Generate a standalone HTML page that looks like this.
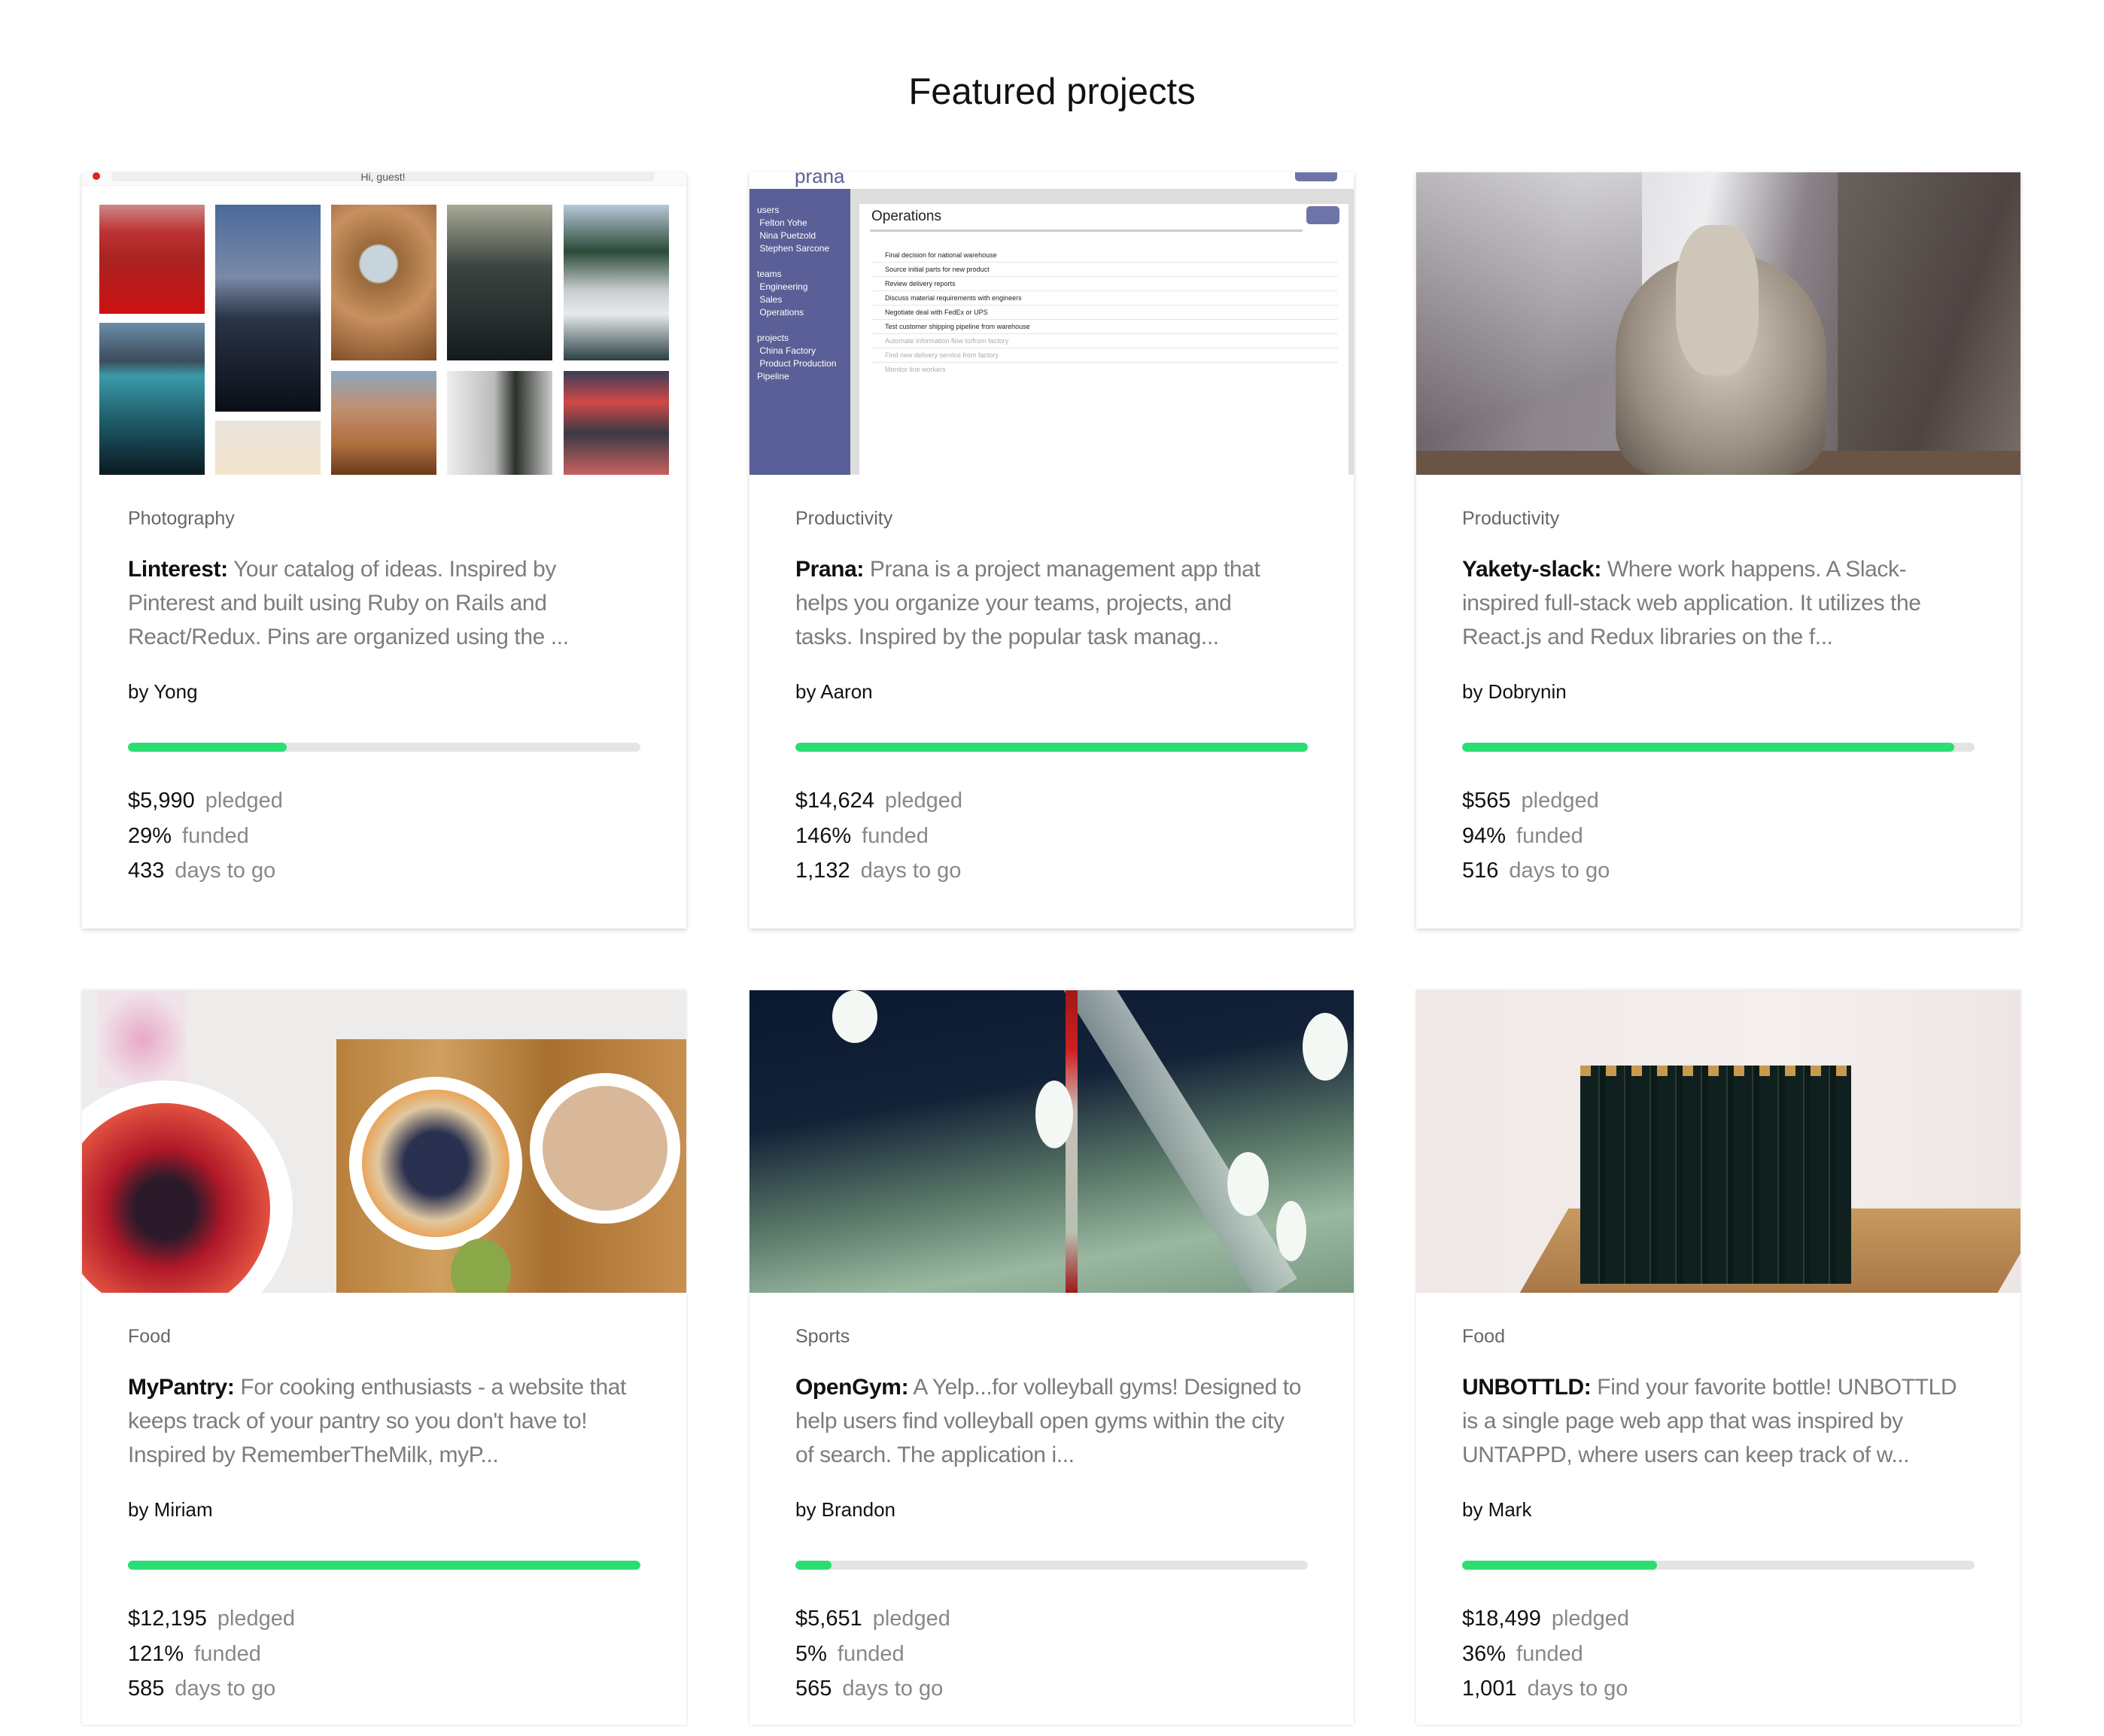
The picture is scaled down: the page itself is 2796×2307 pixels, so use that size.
<!DOCTYPE html>
<html><head><meta charset="utf-8"><style>
*{margin:0;padding:0;box-sizing:border-box}
body{width:2796px;height:2307px;background:#fff;position:relative;overflow:hidden;font-family:"Liberation Sans",sans-serif}
h1{position:absolute;top:92px;left:0;width:2796px;text-align:center;font-weight:normal;font-size:49px;color:#111;line-height:60px}
.card{position:absolute;width:803px;background:#fff;box-shadow:0 2px 6px rgba(0,0,0,.18);overflow:hidden}
.img{position:absolute;left:0;top:0;width:803px;height:402px;overflow:hidden}
.cat{position:absolute;left:61px;top:442px;font-size:25px;line-height:36px;color:#666}
.desc{position:absolute;left:61px;top:505px;width:681px;font-size:30px;letter-spacing:-0.4px;line-height:45px;color:#7c7c7c}
.desc b{color:#111;font-weight:bold}
.by{position:absolute;left:61px;top:672px;font-size:26px;line-height:36px;color:#111}
.bar{position:absolute;left:61px;top:986px;width:681px;height:12px;border-radius:6px;background:#e4e4e4;overflow:hidden}
.bar i{display:block;height:12px;background:#2bde73;border-radius:6px}
.stats{position:absolute;left:61px;top:1042px;font-size:29px;line-height:46.5px;color:#111}
.stats span{color:#888;margin-left:14px}
.r1{top:229px;height:1005px}
.r2{top:1316px;height:976px;box-shadow:0 0 4px rgba(0,0,0,.15)}
.r1 .bar{top:758px}.r1 .stats{top:812px}
.r2 .bar{top:758px}.r2 .stats{top:812px}
.c1{left:109px}.c2{left:996px}.c3{left:1882px}
.a{position:absolute}
</style></head><body>
<h1>Featured projects</h1>

<div class="card r1 c1">
 <div class="img" style="background:#fff">
  <div class="a" style="left:0;top:0;width:805px;height:18px;background:#fafafa;border-bottom:1px solid #eee"></div>
  <div class="a" style="left:40px;top:0;width:720px;height:12px;background:#eee;font-size:14px;line-height:12px;text-align:center;color:#555">Hi, guest!</div>
  <div class="a" style="left:14px;top:0;width:10px;height:10px;border-radius:50%;background:#d22"></div>
  <div class="a" style="left:23px;top:43px;width:140px;height:145px;background:linear-gradient(#c88 0%,#b33 25%,#a22 50%,#c11 100%)"></div>
  <div class="a" style="left:23px;top:200px;width:140px;height:202px;background:linear-gradient(#6a8ca8 0%,#3c4c5c 25%,#3a9aa8 35%,#1e5a68 65%,#0a1a22 100%)"></div>
  <div class="a" style="left:177px;top:43px;width:140px;height:275px;background:linear-gradient(#4a6a9a 0%,#7a8aa8 35%,#2a3446 55%,#0a0e18 100%)"></div>
  <div class="a" style="left:177px;top:330px;width:140px;height:72px;background:linear-gradient(#e8e4dc,#f4e4cc)"></div>
  <div class="a" style="left:331px;top:43px;width:140px;height:207px;background:radial-gradient(circle at 45% 38%,#c8d4dc 0 16%,#9a6a3a 18%,#c89060 50%,#7a4a22 100%)"></div>
  <div class="a" style="left:331px;top:264px;width:140px;height:138px;background:linear-gradient(#8aa8c0 0%,#c09070 35%,#b07040 70%,#6a3a1a 100%)"></div>
  <div class="a" style="left:485px;top:43px;width:140px;height:207px;background:linear-gradient(#a8aa98 0%,#3a4440 40%,#2a3030 70%,#141a1c 100%)"></div>
  <div class="a" style="left:485px;top:264px;width:140px;height:138px;background:linear-gradient(90deg,#eee 0%,#bbb 45%,#2a3028 65%,#ccc 100%)"></div>
  <div class="a" style="left:640px;top:43px;width:140px;height:207px;background:linear-gradient(#b8c8d8 0%,#2a4a38 30%,#c8ccd0 55%,#e8eaec 70%,#2a4044 100%)"></div>
  <div class="a" style="left:640px;top:264px;width:140px;height:138px;background:linear-gradient(#3a3e58 0%,#d04848 30%,#3a3a44 60%,#c86060 100%)"></div>
 </div>
 <div class="cat">Photography</div>
 <div class="desc"><b>Linterest:</b> Your catalog of ideas. Inspired by Pinterest and built using Ruby on Rails and React/Redux. Pins are organized using the ...</div>
 <div class="by">by Yong</div>
 <div class="bar"><i style="width:31%"></i></div>
 <div class="stats">$5,990<span>pledged</span><br>29%<span>funded</span><br>433<span>days to go</span></div>
</div>

<div class="card r1 c2">
 <div class="img" style="background:#ddd">
  <div class="a" style="left:0;top:0;width:805px;height:22px;background:#fff"></div>
  <div class="a" style="left:60px;top:-10px;font-size:26px;color:#5b5f97;line-height:30px">prana</div>
  <div class="a" style="left:725px;top:-6px;width:56px;height:18px;border-radius:5px;background:#6f74a8"></div>
  <div class="a" style="left:0;top:22px;width:134px;height:380px;background:#5b5f97;color:#fff;font-size:12px;line-height:17px;padding:20px 0 0 10px">users<br>&nbsp;Felton Yohe<br>&nbsp;Nina Puetzold<br>&nbsp;Stephen Sarcone<br><br>teams<br>&nbsp;Engineering<br>&nbsp;Sales<br>&nbsp;Operations<br><br>projects<br>&nbsp;China Factory<br>&nbsp;Product Production Pipeline</div>
  <div class="a" style="left:146px;top:42px;width:650px;height:360px;background:#fff"></div>
  <div class="a" style="left:162px;top:48px;font-size:19px;color:#222">Operations</div>
  <div class="a" style="left:160px;top:76px;width:575px;height:3px;background:#ccc"></div>
  <div class="a" style="left:740px;top:45px;width:44px;height:24px;border-radius:5px;background:#6f74a8"></div>
  <div class="a" style="left:162px;top:101px;width:620px;height:170px;background:repeating-linear-gradient(#fff 0 18px,#e6e6e6 18px 19px);font-size:9px;line-height:19px;color:#222;padding-left:18px">Final decision for national warehouse<br>Source initial parts for new product<br>Review delivery reports<br>Discuss material requirements with engineers<br>Negotiate deal with FedEx or UPS<br>Test customer shipping pipeline from warehouse<br><span style="color:#aab">Automate information flow to/from factory</span><br><span style="color:#aab">Find new delivery service from factory</span><br><span style="color:#aab">Monitor line workers</span></div>
 </div>
 <div class="cat">Productivity</div>
 <div class="desc" style="width:650px"><b>Prana:</b> Prana is a project management app that helps you organize your teams, projects, and tasks. Inspired by the popular task manag...</div>
 <div class="by">by Aaron</div>
 <div class="bar"><i style="width:100%"></i></div>
 <div class="stats">$14,624<span>pledged</span><br>146%<span>funded</span><br>1,132<span>days to go</span></div>
</div>

<div class="card r1 c3">
 <div class="img" style="background:linear-gradient(100deg,#6a6268 0%,#d8d8dc 25%,#eeeef0 45%,#8a8288 60%,#5e5454 80%,#7a6e6a 100%)">
  <div class="a" style="left:0;top:0;width:300px;height:402px;background:linear-gradient(160deg,rgba(240,240,244,.6),rgba(90,80,86,.6) 70%)"></div>
  <div class="a" style="left:560px;top:0;width:245px;height:402px;background:linear-gradient(110deg,#6a625e,#4e4442 60%,#7a706a)"></div>
  <div class="a" style="left:0;top:370px;width:805px;height:32px;background:#6a5446"></div>
  <div class="a" style="left:265px;top:110px;width:280px;height:292px;border-radius:45% 45% 20% 20%;background:radial-gradient(ellipse at 50% 40%,#d8d0c6,#9a8e82 60%,#5a524a)"></div>
  <div class="a" style="left:345px;top:70px;width:110px;height:200px;border-radius:40%;background:#cfc6ba"></div>
 </div>
 <div class="cat">Productivity</div>
 <div class="desc"><b>Yakety-slack:</b> Where work happens. A Slack-inspired full-stack web application. It utilizes the React.js and Redux libraries on the f...</div>
 <div class="by">by Dobrynin</div>
 <div class="bar"><i style="width:96%"></i></div>
 <div class="stats">$565<span>pledged</span><br>94%<span>funded</span><br>516<span>days to go</span></div>
</div>

<div class="card r2 c1">
 <div class="img" style="background:#eeeceb">
  <div class="a" style="left:20px;top:0;width:120px;height:130px;background:radial-gradient(ellipse,#e8a8c8,#f0e4ea 70%)"></div>
  <div class="a" style="left:338px;top:65px;width:467px;height:337px;background:linear-gradient(90deg,#b8803c,#d0a060 30%,#a87030 60%,#c89050)"></div>
  <div class="a" style="left:-60px;top:120px;width:340px;height:340px;border-radius:50%;background:#fff"></div>
  <div class="a" style="left:-30px;top:150px;width:280px;height:280px;border-radius:50%;background:radial-gradient(circle,#2a1a2a 0 20%,#b01828 40%,#e05040 70%,#f0a060)"></div>
  <div class="a" style="left:355px;top:115px;width:230px;height:230px;border-radius:50%;background:#fff"></div>
  <div class="a" style="left:372px;top:132px;width:196px;height:196px;border-radius:50%;background:radial-gradient(circle,#2a3050 0 30%,#e0c8a0 55%,#f09030 80%)"></div>
  <div class="a" style="left:595px;top:110px;width:200px;height:200px;border-radius:50%;background:#fff"></div>
  <div class="a" style="left:612px;top:127px;width:166px;height:166px;border-radius:50%;background:#d8b898"></div>
  <div class="a" style="left:490px;top:330px;width:80px;height:90px;border-radius:50%;background:#8aa848"></div>
 </div>
 <div class="cat">Food</div>
 <div class="desc"><b>MyPantry:</b> For cooking enthusiasts - a website that keeps track of your pantry so you don't have to! Inspired by RememberTheMilk, myP...</div>
 <div class="by">by Miriam</div>
 <div class="bar"><i style="width:100%"></i></div>
 <div class="stats">$12,195<span>pledged</span><br>121%<span>funded</span><br>585<span>days to go</span></div>
</div>

<div class="card r2 c2">
 <div class="img" style="background:linear-gradient(170deg,#0a1830 0%,#142238 35%,#5a7868 60%,#9ab8a0 80%,#7a9a84 100%)">
  <div class="a" style="left:380px;top:-60px;width:60px;height:560px;background:linear-gradient(90deg,#9aa8a8,#c8d4d0);transform:rotate(-32deg);transform-origin:top left;opacity:.8"></div>
  <div class="a" style="left:420px;top:0;width:16px;height:402px;background:linear-gradient(#a01818,#d02020 20%,#c8c0b8 40%,#b8c0b0 80%,#a01818)"></div>
  <div class="a" style="left:110px;top:0;width:60px;height:70px;border-radius:50%;background:#f4f8f4"></div>
  <div class="a" style="left:380px;top:120px;width:50px;height:90px;border-radius:50%;background:#f4f8f4"></div>
  <div class="a" style="left:635px;top:215px;width:55px;height:85px;border-radius:50%;background:#f4f8f4"></div>
  <div class="a" style="left:735px;top:30px;width:60px;height:90px;border-radius:50%;background:#f4f8f4"></div>
  <div class="a" style="left:700px;top:280px;width:40px;height:80px;border-radius:50%;background:#f4f8f4"></div>
 </div>
 <div class="cat">Sports</div>
 <div class="desc"><b>OpenGym:</b> A Yelp...for volleyball gyms! Designed to help users find volleyball open gyms within the city of search. The application i...</div>
 <div class="by">by Brandon</div>
 <div class="bar"><i style="width:7%"></i></div>
 <div class="stats">$5,651<span>pledged</span><br>5%<span>funded</span><br>565<span>days to go</span></div>
</div>

<div class="card r2 c3">
 <div class="img" style="background:linear-gradient(90deg,#efe8e6 0%,#f4eeec 60%,#ece6e4 100%)">
  <div class="a" style="left:170px;top:290px;width:635px;height:112px;background:linear-gradient(#c89a60,#a87848);transform:skewX(-30deg)"></div>
  <div class="a" style="left:218px;top:100px;width:360px;height:290px;background:repeating-linear-gradient(90deg,#10201e 0 24px,#2a3a36 24px 26px,#0e1a18 26px 34px)"></div>
  <div class="a" style="left:218px;top:100px;width:360px;height:14px;background:repeating-linear-gradient(90deg,#c89a50 0 14px,transparent 14px 34px)"></div>
 </div>
 <div class="cat">Food</div>
 <div class="desc"><b>UNBOTTLD:</b> Find your favorite bottle! UNBOTTLD is a single page web app that was inspired by UNTAPPD, where users can keep track of w...</div>
 <div class="by">by Mark</div>
 <div class="bar"><i style="width:38%"></i></div>
 <div class="stats">$18,499<span>pledged</span><br>36%<span>funded</span><br>1,001<span>days to go</span></div>
</div>
</body></html>
